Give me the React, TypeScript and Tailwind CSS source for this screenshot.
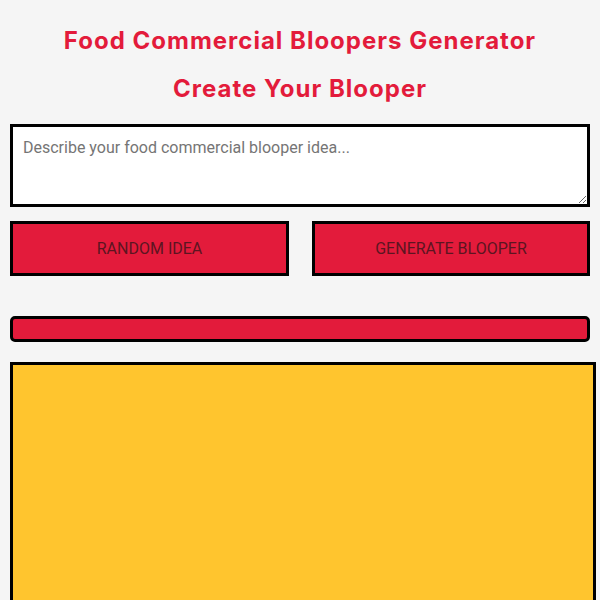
export default function App() {
  return (
    <div className="min-h-[600px] bg-[#f5f5f5] px-[10px] pt-[26px] font-['Roboto',sans-serif]">
      <h1 className="text-center text-[24px] font-bold leading-[30px] tracking-[1px] text-[#e31b3b] font-['Inter',sans-serif]">
        Food Commercial Bloopers Generator
      </h1>
      <h2 className="mt-[18px] text-center text-[24px] font-bold leading-[30px] tracking-[1px] text-[#e31b3b] font-['Inter',sans-serif]">
        Create Your Blooper
      </h2>

      <textarea
        className="mt-[20px] block h-[83px] w-full resize-y border-[3px] border-black bg-white px-[10px] py-[9px] text-[16px] text-gray-700 placeholder:text-[#757575] outline-none"
        placeholder="Describe your food commercial blooper idea..."
      />

      <div className="mt-[14px] flex justify-between">
        <button className="h-[55px] w-[279px] border-[3px] border-black bg-[#e31b3b] text-[16px] uppercase text-[#5c1521]">
          Random Idea
        </button>
        <button className="h-[55px] w-[278px] border-[3px] border-black bg-[#e31b3b] text-[16px] uppercase text-[#5c1521]">
          Generate Blooper
        </button>
      </div>

      <div className="mt-[40px] h-[26px] w-full rounded-[5px] border-[3px] border-black bg-[#e31b3b]" />

      <div className="mt-[20px] h-[260px] w-[586px] border-[3px] border-black bg-[#ffc52e]" />
    </div>
  );
}
